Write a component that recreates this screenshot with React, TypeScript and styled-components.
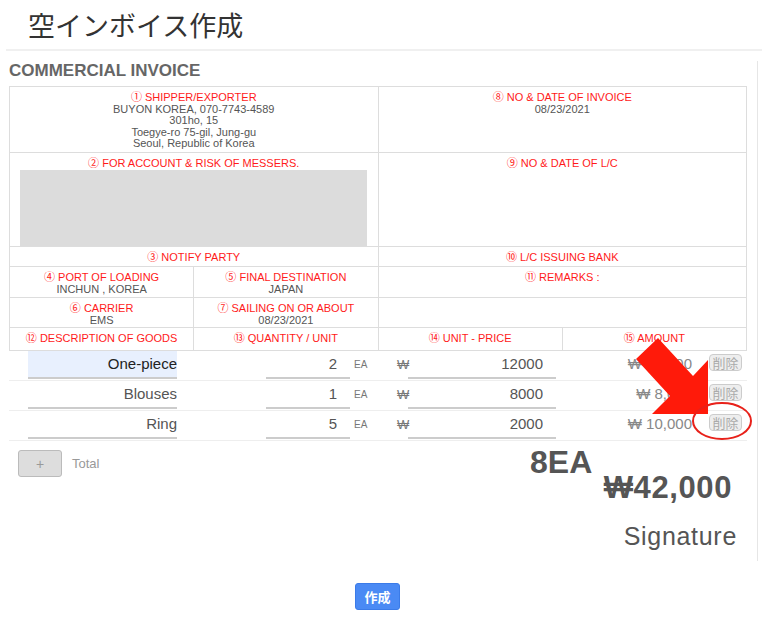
import React from 'react';
import styled, { createGlobalStyle } from 'styled-components';

const GlobalStyle = createGlobalStyle`
  html, body {
    margin: 0;
    padding: 0;
    background: #fff;
  }
  body {
    font-family: "Liberation Sans", "Noto Sans CJK JP", sans-serif;
    color: #555;
  }
`;

const Page = styled.div`
  position: relative;
  width: 762px;
  height: 637px;
  overflow: hidden;
`;

const Header = styled.header`
  margin-left: 6px;
  height: 49px;
  border-bottom: 2px solid #f0f0f0;
  padding-left: 22px;
  display: flex;
  align-items: center;
`;

const Title = styled.h1`
  margin: 0;
  font-family: "Noto Sans CJK JP", sans-serif;
  font-size: 27px;
  font-weight: 400;
  color: #333;
`;

const Panel = styled.section`
  margin-left: 6px;
  width: 752px;
  box-sizing: border-box;
  border-right: 1px solid #e6e6e6;
  padding: 0 10px 12px 3px;
`;

const Heading = styled.h2`
  margin: 10px 0 5px;
  font-size: 17px;
  line-height: 20px;
  font-weight: 700;
  color: #666;
`;

const Sheet = styled.table`
  width: 738px;
  border-collapse: collapse;
  table-layout: fixed;
`;

const Cell = styled.td<{ $h?: number }>`
  border: 1px solid #ddd;
  text-align: center;
  vertical-align: top;
  padding: 5px 4px 0;
  font-size: 11px;
  line-height: 11.5px;
  color: #555;
  height: ${(p) => (p.$h ? `${p.$h}px` : 'auto')};
  box-sizing: border-box;
`;

const Label = styled.div`
  color: #ff1a1a;
`;

const GrayBox = styled.div`
  height: 76px;
  margin: 0 7px 0 6px;
  background: #dcdcdc;
`;

const ItemRow = styled.div`
  display: grid;
  grid-template-columns: 184px 185px 184px 185px;
  height: 30px;
  box-sizing: border-box;
  border-bottom: 1px solid #eee;
`;

const ItemCell = styled.div<{ $pad?: number }>`
  display: flex;
  align-items: flex-start;
  padding-left: ${(p) => p.$pad ?? 0}px;
`;

const Field = styled.input<{ $w: number; $num?: boolean; $filled?: boolean }>`
  width: ${(p) => p.$w}px;
  height: 28px;
  box-sizing: border-box;
  margin: 0;
  border: none;
  border-bottom: 2px solid #ccc;
  border-radius: 0;
  padding: 0 ${(p) => (p.$num ? 13 : 0)}px 2px 0;
  background: ${(p) => (p.$filled ? '#e8f0fe' : 'transparent')};
  font-family: "Liberation Sans", sans-serif;
  font-size: 15px;
  color: ${(p) => (p.$filled ? '#222' : '#555')};
  text-align: right;
  outline: none;
`;

const Unit = styled.span`
  margin-left: 4px;
  font-size: 10px;
  color: #777;
  line-height: 28px;
`;

const Won = styled.span`
  width: 11px;
  font-size: 13px;
  color: #777;
  line-height: 27px;
`;

const Amount = styled.span`
  width: 130px;
  text-align: right;
  font-size: 15px;
  color: #888;
  line-height: 26px;
`;

const DeleteButton = styled.button`
  margin: 3px 0 0 17px;
  width: 33px;
  height: 17px;
  padding: 0;
  border: 1px solid #ccc;
  border-radius: 4px;
  background: #eee;
  font-family: "Noto Sans CJK JP", sans-serif;
  font-size: 13px;
  line-height: 15px;
  color: #aaa;
`;

const Summary = styled.div`
  display: grid;
  grid-template-columns: 521px 1fr;
`;

const AddArea = styled.div`
  display: flex;
  align-items: center;
  gap: 10px;
  padding: 9px 0 0 9px;
  align-self: start;
`;

const AddButton = styled.button`
  width: 44px;
  height: 27px;
  padding: 0;
  border: 1px solid #bbb;
  border-radius: 3px;
  background: #ddd;
  color: #999;
  font-size: 14px;
  font-family: "Liberation Sans", sans-serif;
`;

const TotalLabel = styled.span`
  font-size: 13px;
  color: #999;
`;

const Sums = styled.div`
  display: flex;
  flex-direction: column;
  padding-top: 5px;
`;

const Qty = styled.div`
  align-self: flex-start;
  font-size: 32px;
  line-height: 32px;
  font-weight: 700;
  color: #555;
`;

const Sum = styled.div`
  align-self: flex-end;
  margin: -5px 15px 0 0;
  font-size: 31px;
  line-height: 30px;
  font-weight: 700;
  letter-spacing: 0.6px;
  color: #555;
`;

const Sign = styled.div`
  align-self: flex-end;
  margin: 21px 10px 0 0;
  font-size: 25px;
  line-height: 25px;
  letter-spacing: 0.7px;
  color: #555;
`;

const Footer = styled.div`
  display: flex;
  justify-content: center;
  padding: 22px 7px 0 0;
`;

const CreateButton = styled.button`
  width: 45px;
  height: 27px;
  padding: 0;
  border: 1px solid #3b7be8;
  border-radius: 3px;
  background: #4a8af4;
  color: #fff;
  font-family: "Noto Sans CJK JP", sans-serif;
  font-size: 13px;
  font-weight: 700;
`;

const Overlay = styled.svg`
  position: absolute;
  left: 0;
  top: 0;
  pointer-events: none;
`;

interface Item {
  name: string;
  qty: number;
  price: number;
}

const items: Item[] = [
  { name: 'One-piece', qty: 2, price: 12000 },
  { name: 'Blouses', qty: 1, price: 8000 },
  { name: 'Ring', qty: 5, price: 2000 },
];

const App: React.FC = () => {
  const totalQty = items.reduce((s, i) => s + i.qty, 0);
  const total = items.reduce((s, i) => s + i.qty * i.price, 0);

  return (
    <Page>
      <GlobalStyle />
      <Header>
        <Title>空インボイス作成</Title>
      </Header>
      <Panel>
        <Heading>COMMERCIAL INVOICE</Heading>
        <Sheet>
          <tbody>
            <tr>
              <Cell colSpan={2} $h={66}>
                <Label>① SHIPPER/EXPORTER</Label>
                BUYON KOREA, 070-7743-4589
                <br />
                301ho, 15
                <br />
                Toegye-ro 75-gil, Jung-gu
                <br />
                Seoul, Republic of Korea
              </Cell>
              <Cell colSpan={2}>
                <Label>⑧ NO &amp; DATE OF INVOICE</Label>
                08/23/2021
              </Cell>
            </tr>
            <tr>
              <Cell colSpan={2} $h={94}>
                <Label>② FOR ACCOUNT &amp; RISK OF MESSERS.</Label>
                <GrayBox />
              </Cell>
              <Cell colSpan={2}>
                <Label>⑨ NO &amp; DATE OF L/C</Label>
              </Cell>
            </tr>
            <tr>
              <Cell colSpan={2} $h={20}>
                <Label>③ NOTIFY PARTY</Label>
              </Cell>
              <Cell colSpan={2}>
                <Label>⑩ L/C ISSUING BANK</Label>
              </Cell>
            </tr>
            <tr>
              <Cell $h={31}>
                <Label>④ PORT OF LOADING</Label>
                INCHUN , KOREA
              </Cell>
              <Cell>
                <Label>⑤ FINAL DESTINATION</Label>
                JAPAN
              </Cell>
              <Cell colSpan={2}>
                <Label>⑪ REMARKS :</Label>
              </Cell>
            </tr>
            <tr>
              <Cell $h={30}>
                <Label>⑥ CARRIER</Label>
                EMS
              </Cell>
              <Cell>
                <Label>⑦ SAILING ON OR ABOUT</Label>
                08/23/2021
              </Cell>
              <Cell colSpan={2} />
            </tr>
            <tr>
              <Cell $h={23}>
                <Label>⑫ DESCRIPTION OF GOODS</Label>
              </Cell>
              <Cell>
                <Label>⑬ QUANTITY / UNIT</Label>
              </Cell>
              <Cell>
                <Label>⑭ UNIT - PRICE</Label>
              </Cell>
              <Cell>
                <Label>⑮ AMOUNT</Label>
              </Cell>
            </tr>
          </tbody>
        </Sheet>

        {items.map((item, i) => (
          <ItemRow key={item.name}>
            <ItemCell $pad={19}>
              <Field $w={149} $filled={i === 0} defaultValue={item.name} />
            </ItemCell>
            <ItemCell $pad={73}>
              <Field $w={84} $num defaultValue={String(item.qty)} />
              <Unit>EA</Unit>
            </ItemCell>
            <ItemCell $pad={19}>
              <Won>₩</Won>
              <Field $w={148} $num defaultValue={String(item.price)} />
            </ItemCell>
            <ItemCell>
              <Amount>₩ {(item.qty * item.price).toLocaleString('en-US')}</Amount>
              <DeleteButton>削除</DeleteButton>
            </ItemCell>
          </ItemRow>
        ))}

        <Summary>
          <AddArea>
            <AddButton>+</AddButton>
            <TotalLabel>Total</TotalLabel>
          </AddArea>
          <Sums>
            <Qty>{totalQty}EA</Qty>
            <Sum>₩{total.toLocaleString('en-US')}</Sum>
            <Sign>Signature</Sign>
          </Sums>
        </Summary>
      </Panel>
      <Footer>
        <CreateButton>作成</CreateButton>
      </Footer>

      <Overlay width={762} height={637} viewBox="0 0 762 637">
        <polygon
          points="658,338 693,376 708,360 708,414 652,414 670,396 636,359"
          fill="#ff1a0a"
        />
        <ellipse cx={722} cy={421} rx={29} ry={18} fill="none" stroke="#e8211a" strokeWidth={2} />
      </Overlay>
    </Page>
  );
};

export default App;
